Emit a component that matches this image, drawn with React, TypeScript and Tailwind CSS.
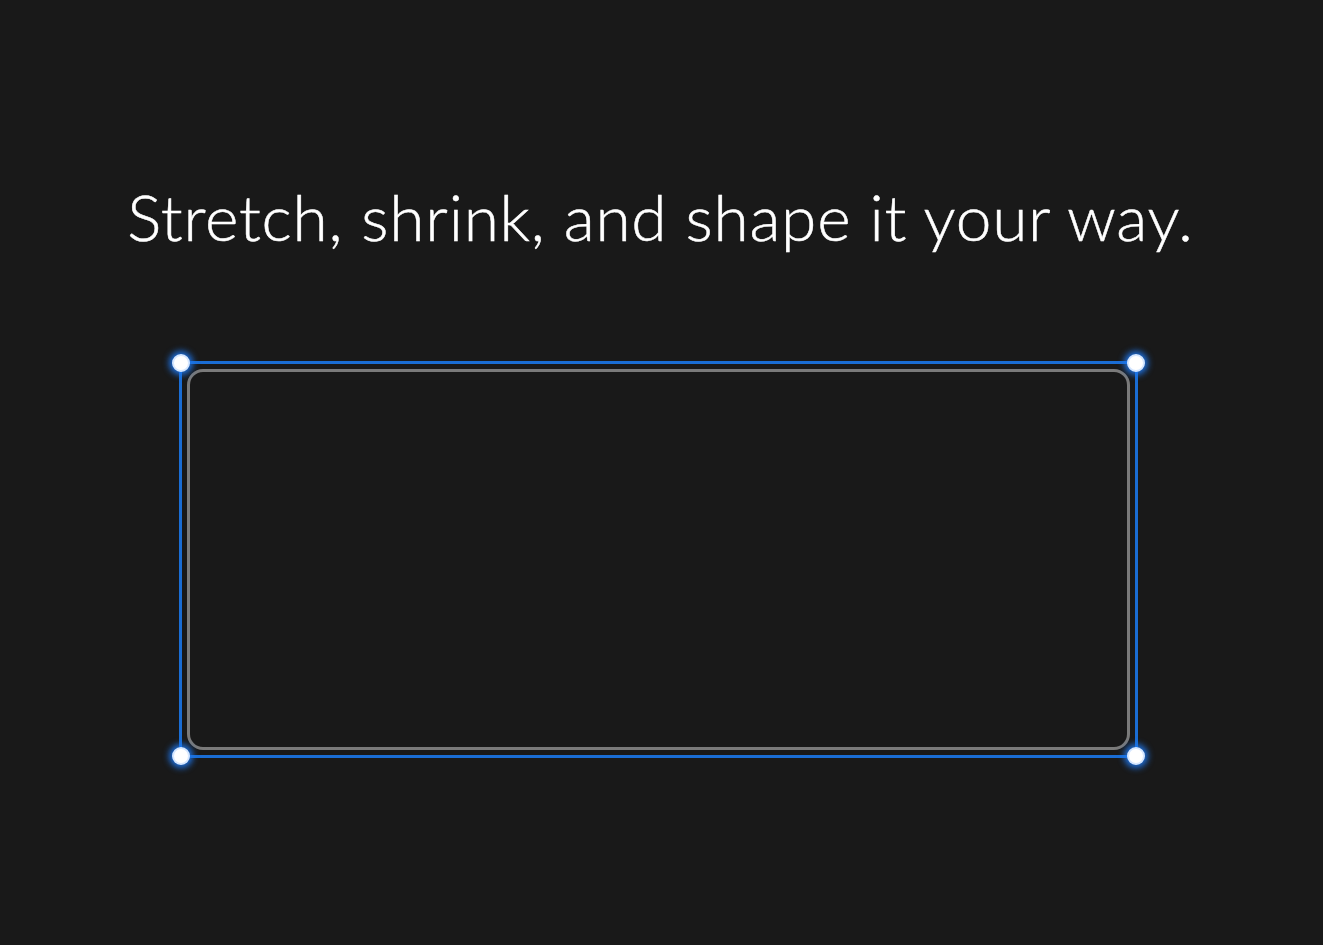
import React from "react";

const Handle = ({ pos }: { pos: string }) => (
  <span
    className={`absolute ${pos} h-[18px] w-[18px] rounded-full bg-white border-2 border-[#d6e7ff] shadow-[0_0_6px_3px_rgba(30,120,240,0.9)]`}
  />
);

export default function App() {
  return (
    <div className="min-h-[945px] w-full bg-[#191919] flex flex-col items-center pt-[179px] font-['Lato','Open_Sans',sans-serif]">
      <h1 className="text-white text-[64px] leading-[76px] font-light tracking-[0.75px] ml-[-2px] [-webkit-text-stroke:0.5px_white]">
        Stretch, shrink, and shape it your way.
      </h1>
      <div className="mt-[106px] ml-[-6px] relative w-[959px] h-[397px] border-[3px] border-[#1a6dd4] p-[5px]">
        <div className="h-full w-full rounded-[16px] border-[3px] border-[#7a7a7a]" />
        <Handle pos="-left-[10px] -top-[10px]" />
        <Handle pos="-right-[10px] -top-[10px]" />
        <Handle pos="-left-[10px] -bottom-[10px]" />
        <Handle pos="-right-[10px] -bottom-[10px]" />
      </div>
    </div>
  );
}
